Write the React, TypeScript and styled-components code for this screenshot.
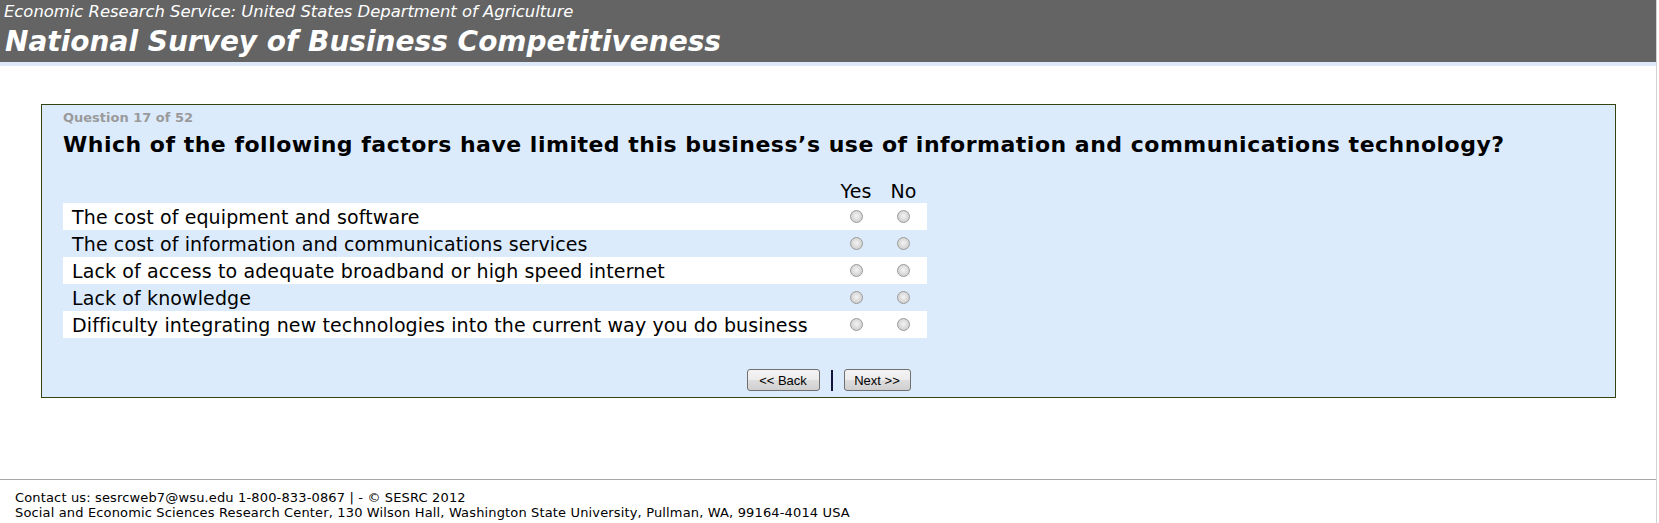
import React from "react";
import styled, { createGlobalStyle } from "styled-components";

const GlobalStyle = createGlobalStyle`
  html, body { margin: 0; padding: 0; background: #ffffff; }
  body { font-family: "DejaVu Sans", Verdana, sans-serif; }
`;

const SANS = `"DejaVu Sans", Verdana, sans-serif`;

const Page = styled.div`
  display: flex;
  flex-direction: column;
  width: 1657px;
  min-height: 100vh;
  box-sizing: border-box;
  border-right: 1px solid #d2d2d2;
`;

const Header = styled.header`
  background: #646464;
  height: 62px;
  padding: 0 4px;
  box-sizing: border-box;
  color: #ffffff;
`;

const Agency = styled.div`
  font-family: ${SANS};
  font-style: italic;
  font-size: 16.4px;
  line-height: 20px;
  padding-top: 2px;
`;

const SurveyTitle = styled.h1`
  margin: 3px 0 0 1px;
  font-family: ${SANS};
  font-style: italic;
  font-weight: bold;
  font-size: 28px;
  line-height: 34px;
`;

const Strip = styled.div`
  height: 4px;
  background: #dde9f9;
`;

const Main = styled.main`
  flex: 1;
  padding: 38px 40px 0 41px;
`;

const QuestionBox = styled.section`
  border: 1px solid #334411;
  background: #dcebfc;
  padding: 5px 21px 6px 21px;
`;

const QuestionNumber = styled.div`
  font-family: ${SANS};
  font-weight: bold;
  font-size: 13px;
  line-height: 15px;
  color: #9a9a9a;
`;

const QuestionText = styled.h2`
  margin: 8px 0 0 0;
  font-family: ${SANS};
  font-weight: bold;
  font-size: 22px;
  letter-spacing: 0.5px;
  line-height: 24px;
  color: #000000;
`;

const Grid = styled.table`
  margin: 21px 0 0 0;
  border-collapse: collapse;
  border-spacing: 0;
  width: 864px;
  font-family: ${SANS};
  font-size: 19px;
  letter-spacing: 0.12px;
  color: #000000;
`;

const HeadCell = styled.th<{ $w?: number }>`
  height: 25px;
  padding: 0;
  font-weight: normal;
  text-align: center;
  line-height: 20px;
  width: ${(p) => (p.$w ? `${p.$w}px` : "auto")};
`;

const Row = styled.tr<{ $odd: boolean }>`
  background: ${(p) => (p.$odd ? "#ffffff" : "transparent")};
`;

const Label = styled.td`
  height: 27px;
  padding: 0 0 0 9px;
  line-height: 20px;
  white-space: nowrap;
`;

const Choice = styled.td`
  padding: 0;
  text-align: center;
  vertical-align: middle;
`;

const Radio = styled.input.attrs({ type: "radio" })`
  appearance: none;
  -webkit-appearance: none;
  width: 13px;
  height: 13px;
  border-radius: 50%;
  border: 1px solid #9c9c9c;
  box-sizing: border-box;
  background: radial-gradient(circle at 50% 45%, #f4f4f4 0%, #dedede 45%, #c4c4c4 100%);
  display: block;
  margin: 0 auto;
`;

const Nav = styled.div`
  margin-top: 31px;
  display: flex;
  justify-content: center;
  align-items: center;
  gap: 11px;
`;

const NavButton = styled.button<{ $w: number }>`
  width: ${(p) => p.$w}px;
  height: 22px;
  padding: 0;
  border: 1px solid #707070;
  border-radius: 3px;
  background: linear-gradient(#f3f3f3 0%, #ececec 48%, #dddddd 52%, #cfcfcf 100%);
  font-family: "Liberation Sans", Arial, sans-serif;
  font-size: 13px;
  color: #000000;
`;

const Divider = styled.span`
  width: 2px;
  height: 21px;
  background: #14143c;
`;

const Footer = styled.footer`
  border-top: 1px solid #a6a6a6;
  padding: 10px 15px 3px 15px;
  font-family: ${SANS};
  font-size: 13px;
  letter-spacing: 0.15px;
  line-height: 15px;
  color: #000000;
`;

const items = [
  "The cost of equipment and software",
  "The cost of information and communications services",
  "Lack of access to adequate broadband or high speed internet",
  "Lack of knowledge",
  "Difficulty integrating new technologies into the current way you do business",
];

export default function App() {
  return (
    <>
      <GlobalStyle />
      <Page>
        <Header>
          <Agency>Economic Research Service: United States Department of Agriculture</Agency>
          <SurveyTitle>National Survey of Business Competitiveness</SurveyTitle>
        </Header>
        <Strip />
        <Main>
          <QuestionBox>
            <QuestionNumber>Question 17 of 52</QuestionNumber>
            <QuestionText>
              Which of the following factors have limited this business’s use of information and communications technology?
            </QuestionText>
            <Grid>
              <thead>
                <tr>
                  <HeadCell />
                  <HeadCell $w={48}>Yes</HeadCell>
                  <HeadCell $w={47}>No</HeadCell>
                </tr>
              </thead>
              <tbody>
                {items.map((text, i) => (
                  <Row key={text} $odd={i % 2 === 0}>
                    <Label>{text}</Label>
                    <Choice>
                      <Radio name={`q17_${i}`} aria-label="Yes" />
                    </Choice>
                    <Choice>
                      <Radio name={`q17_${i}`} aria-label="No" />
                    </Choice>
                  </Row>
                ))}
              </tbody>
            </Grid>
            <Nav>
              <NavButton $w={73}>&lt;&lt; Back</NavButton>
              <Divider />
              <NavButton $w={67}>Next &gt;&gt;</NavButton>
            </Nav>
          </QuestionBox>
        </Main>
        <Footer>
          <div>Contact us: sesrcweb7@wsu.edu 1-800-833-0867 | - © SESRC 2012</div>
          <div>Social and Economic Sciences Research Center, 130 Wilson Hall, Washington State University, Pullman, WA, 99164-4014 USA</div>
        </Footer>
      </Page>
    </>
  );
}
